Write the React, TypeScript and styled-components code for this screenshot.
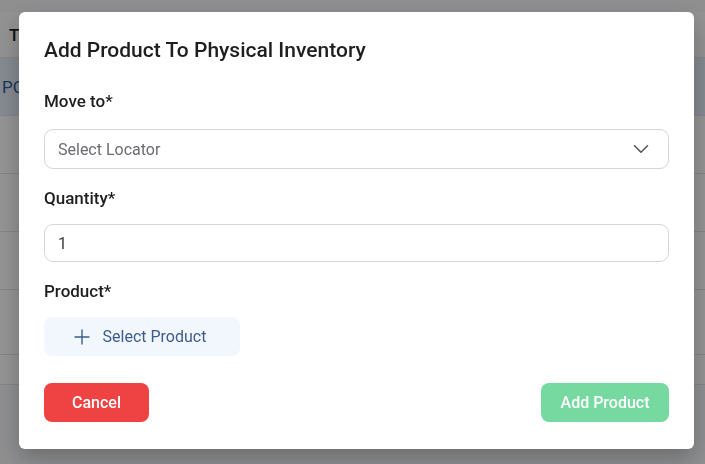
import { ChevronDown, Plus } from 'lucide-react';
import styled, { createGlobalStyle } from 'styled-components';

const GlobalStyle = createGlobalStyle`
    html, body {
        margin: 0;
        padding: 0;
        background: #ffffff;
        font-family: Roboto, "Liberation Sans", Arial, sans-serif;
    }
`

const Page = styled.div`
    width: 705px;
    height: 464px;
    overflow: hidden;
    background: #f6f7f9;
    padding-top: 12px;
    box-sizing: border-box;
`

const Table = styled.div`
    display: flex;
    flex-direction: column;
    background: #ffffff;
`

const TableRow = styled.div<{ $head?: boolean; $active?: boolean; $h: number }>`
    height: ${p => p.$h}px;
    display: flex;
    align-items: center;
    padding-left: ${p => (p.$head ? 9 : 2)}px;
    border-bottom: 1px solid #e3e5e8;
    box-sizing: border-box;
    background: ${p => (p.$active ? '#e6eefa' : p.$head ? '#fbfbfb' : '#ffffff')};
    font-size: 17px;
    font-weight: ${p => (p.$head ? 500 : 400)};
    color: ${p => (p.$head ? '#1f1f1f' : '#2f5a9a')};
`

const Overlay = styled.div`
    position: fixed;
    inset: 0;
    background: rgba(0, 0, 0, 0.42);
    display: flex;
    justify-content: center;
    align-items: flex-start;
    padding: 12px 0 0 8px;
    box-sizing: border-box;
`

const Modal = styled.div`
    width: 675px;
    height: 437px;
    background: #ffffff;
    border-radius: 6px;
    box-shadow: 0 10px 25px rgba(0, 0, 0, 0.25);
    padding: 24px 25px 0 25px;
    box-sizing: border-box;
    display: flex;
    flex-direction: column;
`

const Title = styled.h2`
    margin: 0 0 25px 0;
    font-size: 21px;
    line-height: 28px;
    font-weight: 500;
    color: #1e1e1e;
`

const Field = styled.div<{ $gap: number }>`
    display: flex;
    flex-direction: column;
    margin-bottom: ${p => p.$gap}px;
`

const Label = styled.label<{ $gap: number }>`
    font-size: 17px;
    line-height: 24px;
    font-weight: 500;
    color: #1e1e1e;
    margin-bottom: ${p => p.$gap}px;
`

const SelectBox = styled.div`
    height: 40px;
    border: 1px solid #d4d6d9;
    border-radius: 9px;
    box-sizing: border-box;
    display: flex;
    align-items: center;
    justify-content: space-between;
    padding: 0 14px 0 13px;
    font-size: 16px;
    color: #6a6c70;
`

const TextInput = styled.input`
    height: 38px;
    border: 1px solid #d4d6d9;
    border-radius: 9px;
    box-sizing: border-box;
    padding: 0 13px;
    font-family: inherit;
    font-size: 16px;
    color: #3a3a3a;
    outline: none;
`

const PickButton = styled.button`
    align-self: flex-start;
    width: 196px;
    height: 39px;
    border: none;
    border-radius: 8px;
    background: #f2f7fd;
    color: #3d5c8c;
    font-family: inherit;
    font-size: 16px;
    display: flex;
    align-items: center;
    justify-content: center;
    gap: 9px;
    padding: 0 8px 0 0;
    cursor: pointer;
`

const Footer = styled.div`
    display: flex;
    justify-content: space-between;
    margin-top: 27px;
`

const ActionButton = styled.button<{ $variant: 'cancel' | 'confirm'; $w: number }>`
    width: ${p => p.$w}px;
    height: 39px;
    border: none;
    border-radius: 8px;
    font-family: inherit;
    font-size: 16px;
    font-weight: 500;
    color: #ffffff;
    background: ${p => (p.$variant === 'cancel' ? '#ef4343' : '#76d9a0')};
    cursor: ${p => (p.$variant === 'cancel' ? 'pointer' : 'not-allowed')};
`

const rows = [
    { text: 'T', head: true, h: 46 },
    { text: 'PO', active: true, h: 58 },
    { text: '', h: 58 },
    { text: '', h: 58 },
    { text: '', h: 58 },
    { text: '', h: 65 },
    { text: '', h: 30 },
]

function App() {
    return (
        <>
            <GlobalStyle />
            <Page>
                <Table>
                    {rows.map((r, i) => (
                        <TableRow key={i} $head={r.head} $active={r.active} $h={r.h}>
                            {r.text}
                        </TableRow>
                    ))}
                </Table>
            </Page>
            <Overlay>
                <Modal>
                    <Title>Add Product To Physical Inventory</Title>
                    <Field $gap={17}>
                        <Label $gap={16}>Move to*</Label>
                        <SelectBox>
                            <span>Select Locator</span>
                            <ChevronDown size={26} strokeWidth={1.5} color="#55585c" />
                        </SelectBox>
                    </Field>
                    <Field $gap={17}>
                        <Label $gap={14}>Quantity*</Label>
                        <TextInput defaultValue="1" />
                    </Field>
                    <Field $gap={0}>
                        <Label $gap={14}>Product*</Label>
                        <PickButton>
                            <Plus size={24} strokeWidth={1.4} />
                            Select Product
                        </PickButton>
                    </Field>
                    <Footer>
                        <ActionButton $variant="cancel" $w={105}>Cancel</ActionButton>
                        <ActionButton $variant="confirm" $w={128}>Add Product</ActionButton>
                    </Footer>
                </Modal>
            </Overlay>
        </>
    )
}

export default App
